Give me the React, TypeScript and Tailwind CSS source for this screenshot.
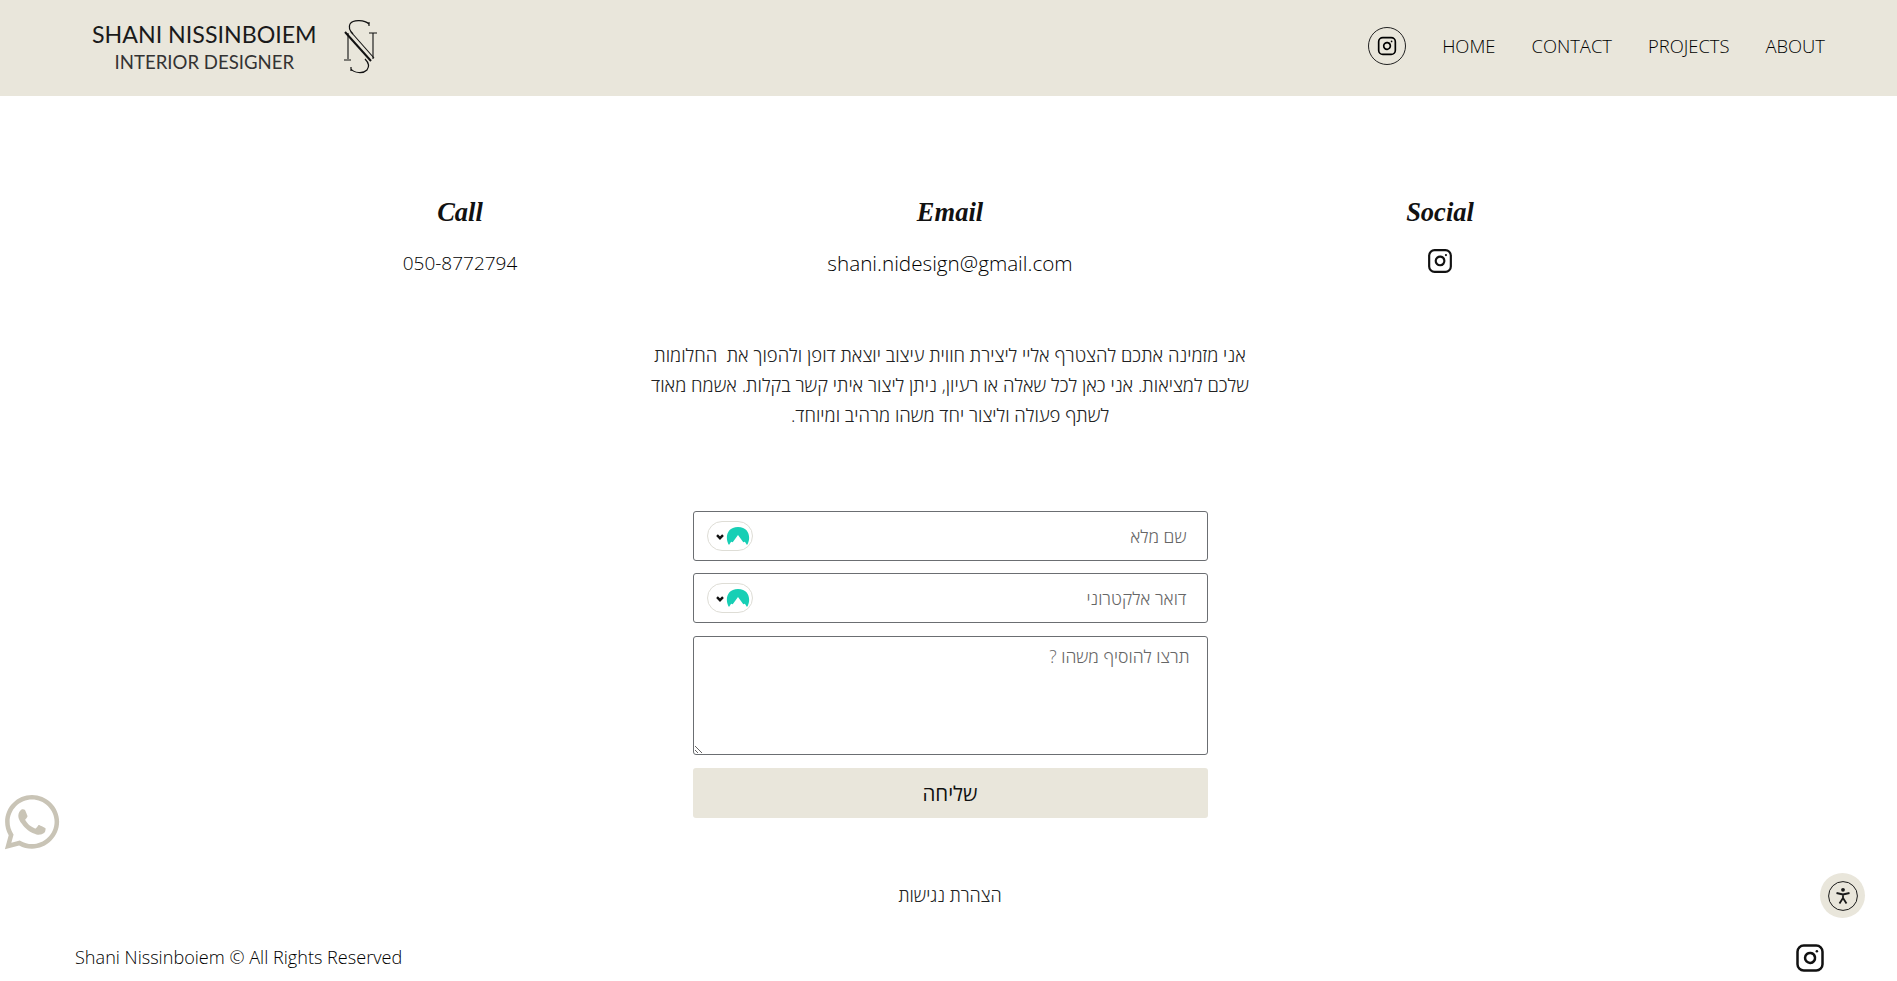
import { Instagram } from 'lucide-react';
import { FaWhatsapp } from 'react-icons/fa';

const bodyFont = "font-['Open_Sans','Noto_Sans',sans-serif]";
const headingClass = "font-['Liberation_Serif',serif] text-[26.5px] leading-[36px] font-bold italic";

function Monogram() {
  return (
    <svg width="36" height="56" viewBox="0 0 36 56" fill="none" stroke="#111" className="block">
      <path d="M28 5 C24 1 12 0 9 5 C7 9 9 12 12 15" strokeWidth="1.2" />
      <path d="M28 3 L28 7" strokeWidth="1.2" />
      <path d="M4 13 L30 42" strokeWidth="2" />
      <path d="M10 13 L33 39" strokeWidth="1.1" />
      <path d="M7 14 L7 40 M3 41 L10 41 M32 14 L32 40 M28 14 L36 14" strokeWidth="1.1" />
      <path d="M24 40 C27 43 29 47 26 51 C22 55 13 54 10 50 M10 48 L10 52" strokeWidth="1.2" />
    </svg>
  );
}

function AccessIcon() {
  return (
    <svg width="30" height="30" viewBox="0 0 30 30" fill="none" stroke="#1a1a1a">
      <circle cx="15" cy="15" r="14.4" strokeWidth="1" />
      <circle cx="15" cy="8.8" r="1.9" fill="#1a1a1a" stroke="none" />
      <path d="M8.5 12 L15 13.5 L21.5 12 M15 13.5 V17 M15 17 L11.5 22.5 M15 17 L18.5 22.5" strokeWidth="1.8" />
    </svg>
  );
}

function PasswordBadge() {
  return (
    <div className="absolute left-[14px] top-[10px] flex h-[30px] w-[46px] items-center gap-[2px] rounded-full border border-[#deddd6] bg-white pl-[8px]">
      <svg width="8" height="6" viewBox="0 0 8 6" fill="none" stroke="#111" strokeWidth="2.4" className="mt-[2px]">
        <path d="M1 1.2 L4 4.2 L7 1.2" />
      </svg>
      <svg width="24" height="18" viewBox="0 0 22 17">
        <path
          d="M2.5 17 C-1.5 11 0 0 11 0 C22 0 23.5 11 19.5 17 L17.5 14 L16 14.5 L11 7.5 L6 14.5 L4.5 14 Z"
          fill="#17cfb5"
        />
      </svg>
    </div>
  );
}

function Field({ placeholder }: { placeholder: string }) {
  return (
    <div className="relative">
      <input
        dir="rtl"
        placeholder={placeholder}
        className="block h-[50px] w-full rounded-[3px] border border-[#6b6e72] bg-white px-[20px] text-[17.6px] font-light text-[#333] placeholder:text-[#666]"
      />
      <PasswordBadge />
    </div>
  );
}

export default function App() {
  return (
    <div className={`relative h-[981px] overflow-hidden bg-white text-[#111] ${bodyFont}`}>
      <header className="flex h-[96px] items-center justify-between bg-[#e9e6db] pb-[3px] pl-[92px] pr-[72px]">
        <div className="flex items-center gap-[24px]">
          <div className="flex flex-col items-center font-['Lato',sans-serif] text-[#1a1a1a]">
            <span className="text-[23.2px] leading-[30px]">SHANI NISSINBOIEM</span>
            <span className="text-[18.6px] leading-[26px] text-[#333]">INTERIOR DESIGNER</span>
          </div>
          <Monogram />
        </div>
        <nav className="flex items-center gap-[36px] pb-[2px] text-[18.4px] font-light text-black">
          <a className="flex h-[38px] w-[38px] items-center justify-center rounded-full border border-[#222]">
            <Instagram size={20} strokeWidth={2} />
          </a>
          <a>HOME</a>
          <a>CONTACT</a>
          <a>PROJECTS</a>
          <a>ABOUT</a>
        </nav>
      </header>

      <main className="flex flex-col items-center pl-[3px]">
        <section className="mt-[98px] grid w-[1470px] grid-cols-3 text-center">
          <div>
            <h2 className={headingClass}>Call</h2>
            <p className="mt-[18px] text-[19px] leading-[30px] font-light text-black">050-8772794</p>
          </div>
          <div>
            <h2 className={headingClass}>Email</h2>
            <p className="mt-[18px] text-[20.7px] leading-[30px] font-light text-black">shani.nidesign@gmail.com</p>
          </div>
          <div>
            <h2 className={headingClass}>Social</h2>
            <div className="mt-[18px] flex justify-center">
              <Instagram size={26} strokeWidth={2} />
            </div>
          </div>
        </section>

        <p dir="rtl" className="mt-[62px] w-[620px] text-center text-[18.5px] leading-[30px] font-light text-[#222]">
          אני מזמינה אתכם להצטרף אליי ליצירת חווית עיצוב יוצאת דופן ולהפוך את&nbsp; החלומות שלכם למציאות. אני כאן לכל
          שאלה או רעיון, ניתן ליצור איתי קשר בקלות. אשמח מאוד לשתף פעולה וליצור יחד משהו מרהיב ומיוחד.
        </p>

        <form className="mt-[81px] flex w-[515px] flex-col gap-[12px]">
          <Field placeholder="שם מלא" />
          <Field placeholder="דואר אלקטרוני" />
          <textarea
            dir="rtl"
            placeholder="תרצו להוסיף משהו ?"
            className="mt-[1px] block h-[119px] w-full rounded-[3px] border border-[#6b6e72] bg-white px-[17px] py-[6px] text-[17.6px] font-light placeholder:text-[#666]"
          />
          <button type="button" className="mt-[1px] h-[50px] rounded-[3px] bg-[#e9e6db] text-[20.5px] font-normal">
            שליחה
          </button>
        </form>

        <a dir="rtl" className="mt-[63px] text-[18px] leading-[28px] font-light text-[#222]">
          הצהרת נגישות
        </a>
      </main>

      <footer className="absolute inset-x-0 bottom-[8px] flex items-center justify-between pl-[75px] pr-[72px]">
        <span className="text-[18.1px] font-light text-black">Shani Nissinboiem © All Rights Reserved</span>
        <Instagram size={30} strokeWidth={2} />
      </footer>

      <FaWhatsapp className="absolute left-[1px] top-[791px] text-[#c9c4b6]" size={62} />

      <div className="absolute left-[1820px] top-[873px] flex h-[45px] w-[45px] items-center justify-center rounded-full bg-[#e9e6db]">
        <AccessIcon />
      </div>
    </div>
  );
}
